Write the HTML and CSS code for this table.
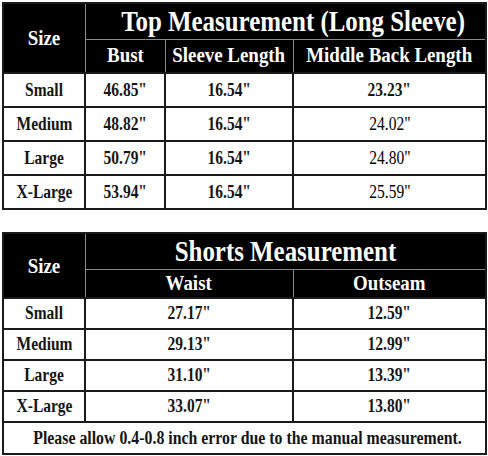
FILE: index.html
```html
<!DOCTYPE html>
<html lang="en">
<head>
    <meta charset="UTF-8">
    <title>Size Chart</title>
    <link rel="stylesheet" href="styles.css">
</head>
<body>

    <table class="chart chart-top">
        <colgroup>
            <col class="col-size">
            <col class="col-bust">
            <col class="col-sleeve">
            <col class="col-back">
        </colgroup>
        <thead>
            <tr class="title-row">
                <th rowspan="2" class="size-head"><span class="sq">Size</span></th>
                <th colspan="3" class="title"><span class="sq">Top Measurement (Long Sleeve)</span></th>
            </tr>
            <tr class="sub-row">
                <th><span class="sq">Bust</span></th>
                <th><span class="sq">Sleeve Length</span></th>
                <th><span class="sq">Middle Back Length</span></th>
            </tr>
        </thead>
        <tbody>
            <tr>
                <td><span class="sq">Small</span></td>
                <td><span class="sq">46.85"</span></td>
                <td><span class="sq">16.54"</span></td>
                <td><span class="sq">23.23"</span></td>
            </tr>
            <tr>
                <td><span class="sq">Medium</span></td>
                <td><span class="sq">48.82"</span></td>
                <td><span class="sq">16.54"</span></td>
                <td class="light"><span class="sq">24.02"</span></td>
            </tr>
            <tr>
                <td><span class="sq">Large</span></td>
                <td><span class="sq">50.79"</span></td>
                <td><span class="sq">16.54"</span></td>
                <td class="light"><span class="sq">24.80"</span></td>
            </tr>
            <tr>
                <td><span class="sq">X-Large</span></td>
                <td><span class="sq">53.94"</span></td>
                <td><span class="sq">16.54"</span></td>
                <td class="light"><span class="sq">25.59"</span></td>
            </tr>
        </tbody>
    </table>

    <table class="chart chart-shorts">
        <colgroup>
            <col class="col-size">
            <col class="col-waist">
            <col class="col-back">
        </colgroup>
        <thead>
            <tr class="title-row">
                <th rowspan="2" class="size-head"><span class="sq">Size</span></th>
                <th colspan="2" class="title"><span class="sq">Shorts Measurement</span></th>
            </tr>
            <tr class="sub-row">
                <th><span class="sq">Waist</span></th>
                <th><span class="sq">Outseam</span></th>
            </tr>
        </thead>
        <tbody>
            <tr>
                <td><span class="sq">Small</span></td>
                <td><span class="sq">27.17"</span></td>
                <td><span class="sq">12.59"</span></td>
            </tr>
            <tr>
                <td><span class="sq">Medium</span></td>
                <td><span class="sq">29.13"</span></td>
                <td><span class="sq">12.99"</span></td>
            </tr>
            <tr>
                <td><span class="sq">Large</span></td>
                <td><span class="sq">31.10"</span></td>
                <td><span class="sq">13.39"</span></td>
            </tr>
            <tr>
                <td><span class="sq">X-Large</span></td>
                <td><span class="sq">33.07"</span></td>
                <td><span class="sq">13.80"</span></td>
            </tr>
            <tr class="note-row">
                <td colspan="3"><span class="sq">Please allow 0.4-0.8 inch error due to the manual measurement.</span></td>
            </tr>
        </tbody>
    </table>

</body>
</html>
```

FILE: styles.css
```css
body {
    margin: 0;
    padding: 2px 3px 0 2px;
    background: white;
    font-family: "Liberation Serif", "Times New Roman", serif;
    font-weight: bold;
    color: #151515;
}

.chart {
    width: 483px;
    table-layout: fixed;
    border-collapse: collapse;
    border: 2px solid #1a1a1a;
}

.chart-shorts {
    margin-top: 22px;
}

.col-size { width: 82px; }
.col-bust { width: 80px; }
.col-sleeve { width: 128px; }
.col-waist { width: 208px; }
.col-back { width: 193px; }

.sq {
    display: inline-block;
    white-space: nowrap;
    transform: scaleX(0.86);
}

th {
    background: #000;
    color: #fff;
    border: 1px solid #8a8a8a;
    padding: 0;
    font-weight: bold;
}

.size-head {
    font-size: 22px;
}

.title-row {
    height: 36px;
}

.title {
    font-size: 30px;
}

.title .sq {
    transform: scaleX(0.83);
}

.sub-row th {
    font-size: 21px;
}

.sub-row th .sq {
    transform: scaleX(0.9);
}

.chart-top .sub-row {
    height: 34px;
}

.chart-shorts .sub-row {
    height: 29px;
}

td {
    border: 2px solid #1a1a1a;
    padding: 0;
    text-align: center;
    font-size: 18px;
}

.chart-top tbody tr {
    height: 34px;
}

.chart-shorts tbody tr {
    height: 31px;
}

td.light {
    font-weight: normal;
    color: #000;
}

.note-row td {
    font-size: 18px;
}

.chart-shorts .note-row {
    height: 32px;
}

.note-row .sq {
    transform: scaleX(0.88);
}
```
